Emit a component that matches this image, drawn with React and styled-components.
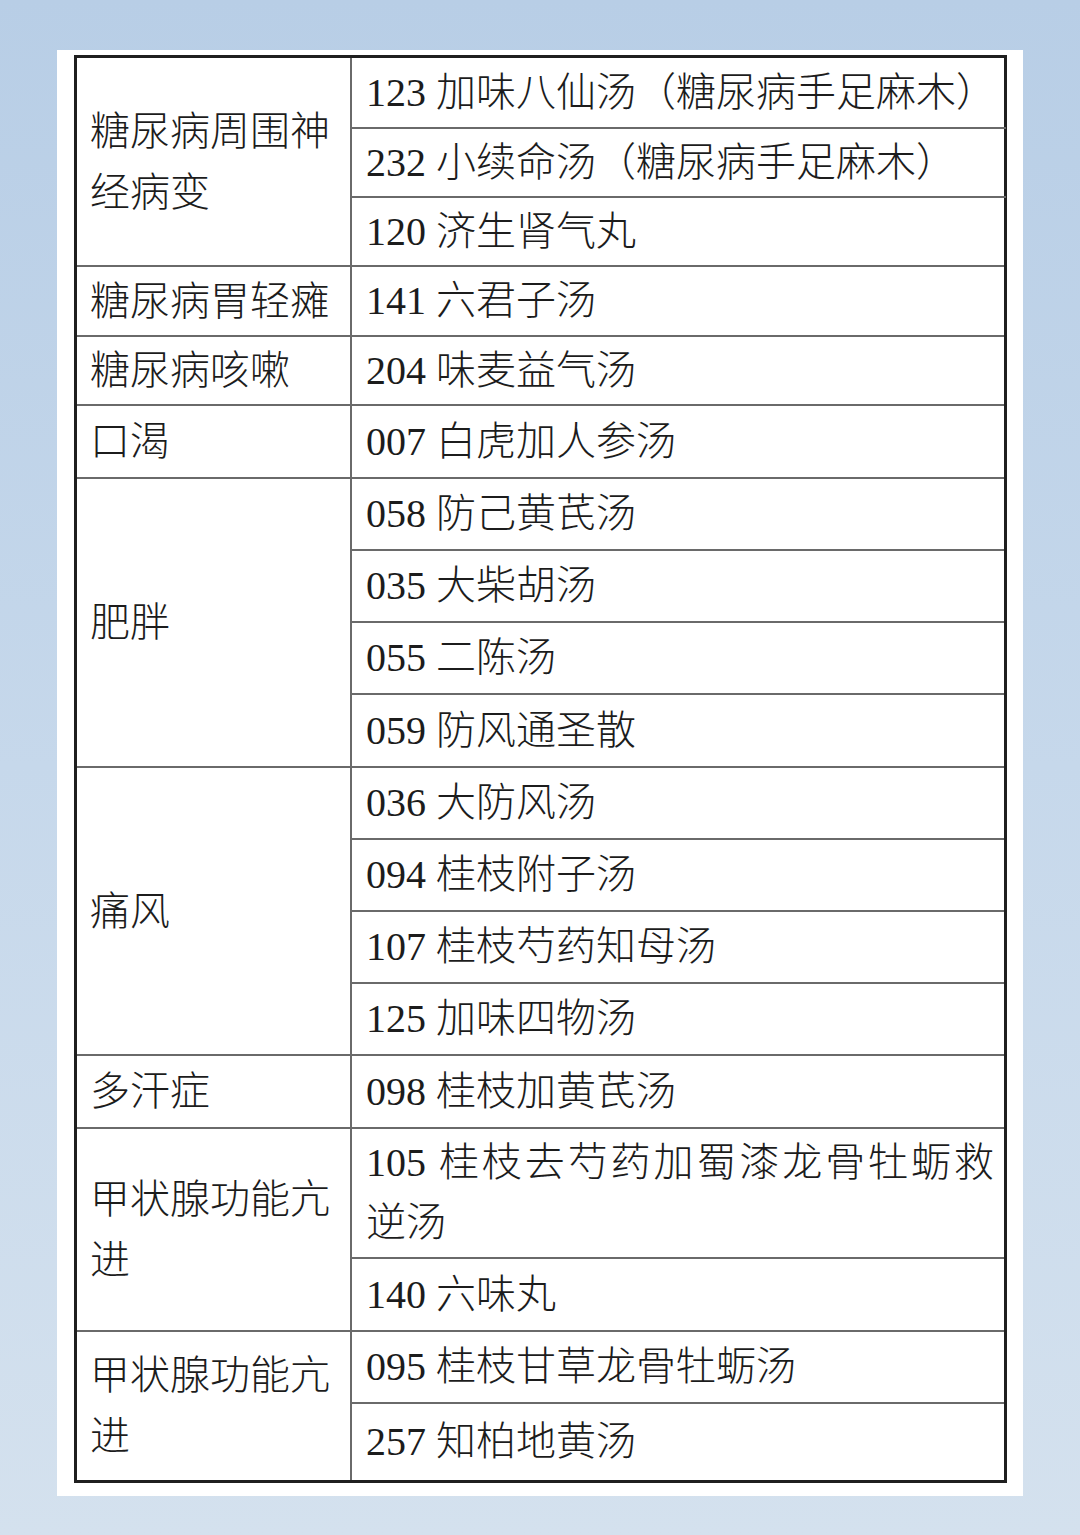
import React from 'react'
import styled, { createGlobalStyle } from 'styled-components'

const GlobalStyle = createGlobalStyle`
	html, body {
		margin: 0;
		padding: 0;
	}
	body {
		background: linear-gradient(180deg, #b8cee6 0%, #c6d8eb 50%, #d4e1ee 100%);
		min-height: 1535px;
	}
`

const Page = styled.div`
	width: 1080px;
	min-height: 1535px;
	box-sizing: border-box;
	padding: 50px 0 0 57px;
`

const Card = styled.div`
	width: 966px;
	box-sizing: border-box;
	background: #ffffff;
	padding: 5px 16px 13px 17px;
`

const Table = styled.div`
	display: flex;
	flex-direction: column;
	border: 3px solid #1f1f1f;
	font-family: 'Liberation Serif', 'Noto Sans CJK SC', serif;
	font-weight: 300;
	font-size: 40px;
	color: #1c1c1c;
	text-spacing-trim: space-all;
`

const Group = styled.div`
	display: grid;
	grid-template-columns: 275px 1fr;
	border-top: ${(p) => (p.$first ? 'none' : '2px solid #6a6a6a')};
`

const Label = styled.div`
	display: flex;
	align-items: center;
	box-sizing: border-box;
	padding: 0 10px 0 13px;
	border-right: 2px solid #6a6a6a;
	line-height: 61px;
`

const Items = styled.div`
	display: flex;
	flex-direction: column;
`

const Item = styled.div`
	display: flex;
	flex-direction: column;
	justify-content: center;
	box-sizing: border-box;
	height: ${(p) => p.$h}px;
	padding: 0 10px 0 14px;
	border-top: ${(p) => (p.$first ? 'none' : '2px solid #6a6a6a')};
	line-height: 60px;
	white-space: nowrap;
`

const Line = styled.span`
	display: block;
	text-align: ${(p) => (p.$justify ? 'justify' : 'left')};
	text-align-last: ${(p) => (p.$justify ? 'justify' : 'auto')};
`

// row heights are measured from one rule line to the next
const groups = [
	{
		label: '糖尿病周围神经病变',
		items: [
			{ h: 69, lines: ['123 加味八仙汤（糖尿病手足麻木）'] },
			{ h: 69, lines: ['232 小续命汤（糖尿病手足麻木）'] },
			{ h: 69, lines: ['120 济生肾气丸'] },
		],
	},
	{ label: '糖尿病胃轻瘫', items: [{ h: 70, lines: ['141 六君子汤'] }] },
	{ label: '糖尿病咳嗽', items: [{ h: 69, lines: ['204 味麦益气汤'] }] },
	{ label: '口渴', items: [{ h: 73, lines: ['007 白虎加人参汤'] }] },
	{
		label: '肥胖',
		items: [
			{ h: 72, lines: ['058 防己黄芪汤'] },
			{ h: 72, lines: ['035 大柴胡汤'] },
			{ h: 72, lines: ['055 二陈汤'] },
			{ h: 73, lines: ['059 防风通圣散'] },
		],
	},
	{
		label: '痛风',
		items: [
			{ h: 72, lines: ['036 大防风汤'] },
			{ h: 72, lines: ['094 桂枝附子汤'] },
			{ h: 72, lines: ['107 桂枝芍药知母汤'] },
			{ h: 72, lines: ['125 加味四物汤'] },
		],
	},
	{ label: '多汗症', items: [{ h: 73, lines: ['098 桂枝加黄芪汤'] }] },
	{
		label: '甲状腺功能亢进',
		items: [
			{ h: 130, lines: ['105 桂枝去芍药加蜀漆龙骨牡蛎救', '逆汤'] },
			{ h: 73, lines: ['140 六味丸'] },
		],
	},
	{
		label: '甲状腺功能亢进',
		items: [
			{ h: 72, lines: ['095 桂枝甘草龙骨牡蛎汤'] },
			{ h: 78, lines: ['257 知柏地黄汤'] },
		],
	},
]

const App = () => {
	return (
		<>
			<GlobalStyle />
			<Page>
				<Card>
					<Table>
						{groups.map((group, gi) => (
							<Group key={gi} $first={gi === 0}>
								<Label>{group.label}</Label>
								<Items>
									{group.items.map((item, ii) => (
										<Item
											key={ii}
											$h={gi > 0 && ii === 0 ? item.h - 2 : item.h}
											$first={ii === 0}
										>
											{item.lines.map((line, li) => (
												<Line
													key={li}
													$justify={item.lines.length > 1 && li === 0}
												>
													{line}
												</Line>
											))}
										</Item>
									))}
								</Items>
							</Group>
						))}
					</Table>
				</Card>
			</Page>
		</>
	)
}

export default App
